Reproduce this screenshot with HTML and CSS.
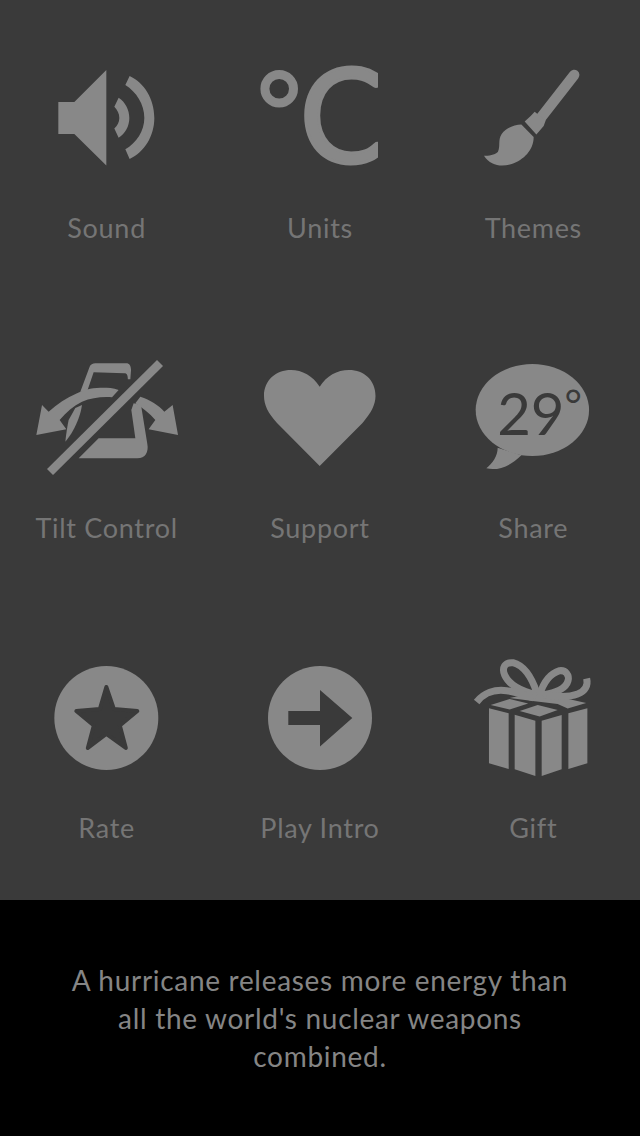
FILE: index.html
```html
<!DOCTYPE html>
<html lang="en">
<head>
    <meta charset="UTF-8">
    <meta name="viewport" content="width=device-width, initial-scale=1.0">
    <title>Settings</title>
    <link rel="stylesheet" href="styles.css">
</head>
<body>
    <div class="menu-grid">
        <div class="menu-item">
            <svg class="menu-icon" viewBox="26.67 58 160 120">
                <path d="M58 102H74L106 70V165.500L74 134H58Z"/>
                <path d="M118.300 97.700C125 102 129 110 129 118C129 126 125 133.500 118.300 137.700L114 128.500C117 126 119 122 119 118C119 113.500 117 110 114 106.700Z"/>
                <path d="M129.300 76C144 83 154 99 154 118C154 136 144 152 129.300 159L125 149.300C136 143 144 131 144 118C144 104 136 92 125 85Z"/>
            </svg>
            <span class="menu-label">Sound</span>
        </div>
        <div class="menu-item">
            <svg class="menu-icon" viewBox="240 58 160 120">
                <circle class="ring" cx="279.200" cy="88.800" r="14.300"/>
                <text class="unit-letter" x="299.500" y="163">C</text>
                <rect class="unit-cut" x="378" y="60" width="22" height="115"/>
            </svg>
            <span class="menu-label">Units</span>
        </div>
        <div class="menu-item">
            <svg class="menu-icon" viewBox="453.33 58 160 120">
                <path class="handle" d="M574.500 75L541 118"/>
                <path d="M535 111.700L546 120.500L544 126L536.700 134.500L525 121.500L531 116Z"/>
                <path d="M521.700 124.500L534 137C534 150 524 160 512 164C502 167 491 166 484.300 155.700C491 156 496.500 154 498.300 151.700C501 146 498 140 502 134C507 127 515 125 521.700 124.500Z"/>
            </svg>
            <span class="menu-label">Themes</span>
        </div>
        <div class="menu-item">
            <svg class="menu-icon" viewBox="26.67 358 160 120">
                <path d="M80 391.700L89.300 366.700C90 364.500 92.500 363.300 95 363.300H126C129 363.300 130.700 366 130.700 370L130 379.300L127.500 379.300C127.500 376 127 373.300 124 373.300L93.300 372.300L86.700 391.700Z"/>
                <path d="M41.700 405L36 435L66 429.300L59.300 420C66 412 73 406 81.700 401.700C91 398 101 396.500 111.700 397.300L118.300 390C112 387.500 106 387.700 100 387.700C90 388 83 390 76.700 393.300C66 398 57 404 48.300 411.700Z"/>
                <path d="M75 408L81.700 405C80 417 74 431 65 441.700C66 433 67 426 68.300 420Z"/>
                <path d="M140 396.700L135 403.300C142 408 149 413 155 420L148.300 429.300L177.700 435L172.300 405L164 411.700C158 405 150 400 140 396.700Z"/>
                <path d="M133.300 403.300L140.700 405L147 444C148.500 452 145 458.300 137 458.300H78.300L98.300 438.300H135L131 410Z"/>
                <path d="M156.700 360L162.700 366L52.700 475L46.700 469Z"/>
            </svg>
            <span class="menu-label">Tilt Control</span>
        </div>
        <div class="menu-item">
            <svg class="menu-icon" viewBox="240 358 160 120">
                <path d="M319.700 466L277 423C268 413 264 405 264 396C264 380 276 370 291 370C302 370 313 376 319.700 386.700C326.500 376 337 370 349 370C364 370 375.500 380 375.500 396C375.500 405 371 413 362.500 423Z"/>
            </svg>
            <span class="menu-label">Support</span>
        </div>
        <div class="menu-item">
            <svg class="menu-icon" viewBox="453.33 358 160 120">
                <ellipse cx="532.700" cy="410" rx="56.700" ry="46"/>
                <path d="M498 447.700C498 456 493 463 486.700 468.300C497 471 510 467 521.700 455.300Z"/>
                <text class="bubble-text" x="497.500" y="434.500">29<tspan class="bubble-degree" dy="-15">°</tspan></text>
            </svg>
            <span class="menu-label">Share</span>
        </div>
        <div class="menu-item">
            <svg class="menu-icon" viewBox="26.67 658 160 120">
                <circle cx="106" cy="718" r="52"/>
                <polygon class="cutout" points="106,687 113.500,709 137,711 119.500,725.500 125.500,748 106,734 87.500,748 93.500,725.500 76,711 99.500,709"/>
            </svg>
            <span class="menu-label">Rate</span>
        </div>
        <div class="menu-item">
            <svg class="menu-icon" viewBox="240 658 160 120">
                <circle cx="320" cy="718" r="52"/>
                <path class="arrow" d="M288.300 711H320V690L352.300 718L320 746.500V725H288.300Z"/>
            </svg>
            <span class="menu-label">Play Intro</span>
        </div>
        <div class="menu-item">
            <svg class="menu-icon" viewBox="453.33 658 160 120">
                <path d="M489.300 708.300L509 713.300V769L489.300 763.300Z"/>
                <path d="M515 714.700L535.700 720.700V776L515 769.300Z"/>
                <path d="M542 720.700L562 715V769.300L542 776Z"/>
                <path d="M568.700 713.300L587.700 708.300V763.300L568.700 769Z"/>
                <path d="M491 705L510 699L528.500 703.500L510 709.500Z"/>
                <path d="M520 711L538 705L558 710L540 716.500Z"/>
                <path d="M510 698L538 692L586.500 703L568 708.500L558 704L533 701Z"/>
                <path class="ribbon" d="M537.300 693.300C533 680 526 666 513.300 662.700C505 662 502 668 505 675C509 684 520 691 537.300 695"/>
                <path class="ribbon" d="M540 695C543 685 549 674 560 670.700C566 670 570 675 568.300 681C566 689 555 693 543.300 695"/>
                <path class="ribbon" d="M477 702C484 693 495 689 507 690.700C516 692 524 695 534 698"/>
                <path class="ribbon" d="M546.700 695C558 697 570 697 578 694C586 691 588.500 685 587 678.500"/>
            </svg>
            <span class="menu-label">Gift</span>
        </div>
    </div>

    <div class="fact-bar">
        <p class="fact-text">A hurricane releases more energy than all the world's nuclear weapons combined.</p>
    </div>
</body>
</html>
```
FILE: styles.css
```css
body {
    margin: 0;
    background-color: #3a3a3a;
    font-family: Lato, "Open Sans", sans-serif;
}

.menu-grid {
    display: grid;
    grid-template-columns: repeat(3, 1fr);
    height: 900px;
}

.menu-item {
    display: flex;
    flex-direction: column;
    align-items: center;
    height: 300px;
    padding-top: 58px;
    box-sizing: border-box;
}

.menu-icon {
    display: block;
    width: 160px;
    height: 120px;
    overflow: visible;
    fill: #888888;
}

.menu-label {
    margin-top: 33px;
    font-size: 27px;
    line-height: 34px;
    letter-spacing: 0.7px;
    color: #757575;
}

.ring {
    fill: none;
    stroke: #888888;
    stroke-width: 9;
}

.handle {
    fill: none;
    stroke: #888888;
    stroke-width: 10.5;
    stroke-linecap: round;
}

.ribbon {
    fill: none;
    stroke: #888888;
    stroke-width: 7;
}

.unit-letter {
    font-size: 131px;
    fill: #888888;
    stroke: #888888;
    stroke-width: 3;
}

.unit-cut {
    fill: #3a3a3a;
}

.bubble-text {
    font-size: 58px;
    fill: #3a3a3a;
}

.bubble-degree {
    font-size: 42px;
}

.cutout {
    fill: #3a3a3a;
    stroke: #3a3a3a;
    stroke-width: 4;
    stroke-linejoin: round;
}

.arrow {
    fill: #3a3a3a;
}

.fact-bar {
    height: 236px;
    padding: 61px 60px 0;
    box-sizing: border-box;
    background-color: #000000;
}

.fact-text {
    margin: 0;
    text-align: center;
    font-size: 28px;
    line-height: 38px;
    letter-spacing: 0.7px;
    color: #858585;
}
```
